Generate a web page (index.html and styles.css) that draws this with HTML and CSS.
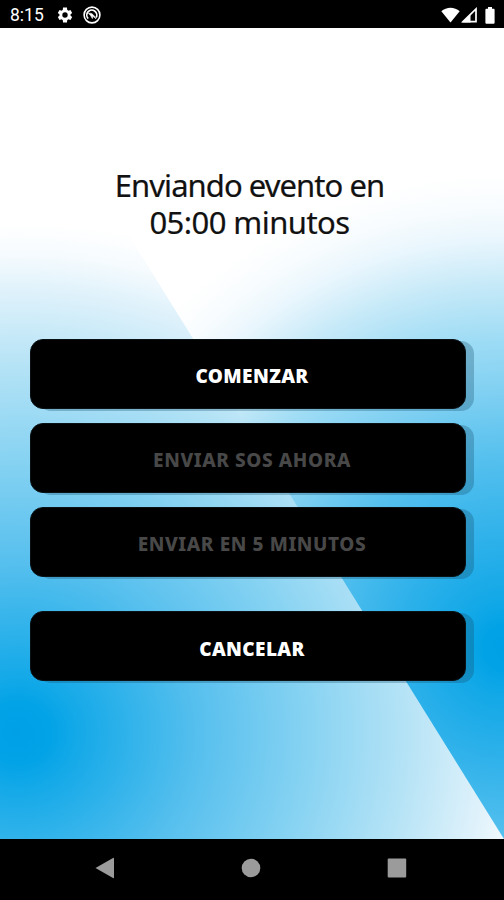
FILE: index.html
```html
<!DOCTYPE html>
<html lang="es">
<head>
    <meta charset="UTF-8">
    <meta name="viewport" content="width=device-width, initial-scale=1.0">
    <title>Enviando evento</title>
    <link rel="stylesheet" href="styles.css">
</head>
<body>

    <header class="status-bar">
        <div class="status-left">
            <span class="clock">8:15</span>
            <svg class="gear" width="18" height="18" viewBox="0 0 24 24">
                <path fill="#fff" fill-rule="evenodd" d="M19.4 13a7.500 7.500 0 0 0 0-2l2.200-1.700-2.300-4-2.700 1a7.500 7.500 0 0 0-1.600-1L14.600 2H9.400L9 5.300a7.500 7.500 0 0 0-1.600 1l-2.700-1-2.300 4L4.600 11a7.500 7.500 0 0 0 0 2l-2.200 1.700 2.300 4 2.700-1a7.500 7.500 0 0 0 1.600 1l.4 3.300h5.200l.4-3.300a7.500 7.500 0 0 0 1.600-1l2.700 1 2.300-4zM12 15.600a3.600 3.600 0 1 1 0-7.200 3.600 3.600 0 0 1 0 7.200z"/>
            </svg>
            <svg class="target" width="18" height="18" viewBox="0 0 18 18" fill="none" stroke="#fff">
                <circle cx="9" cy="9" r="7.900" stroke-width="1.600"/>
                <path d="M5.200 12.600A5 5 0 1 1 13.200 11.500" stroke-width="1.700"/>
                <path d="M5.500 7.500C8 6.600 10.500 8 13 12.800L9.800 10.200 9.400 12.600 7.600 9.600z" fill="#fff" stroke-width=".6"/>
            </svg>
        </div>
        <div class="status-right">
            <svg width="19" height="16" viewBox="0 0 19 16">
                <path fill="#fff" d="M.3 4.300C5.500-.5 13.500-.5 18.700 4.300L9.500 15.500z"/>
            </svg>
            <svg width="17" height="16" viewBox="0 0 17 16">
                <path fill="none" stroke="#fff" stroke-width="1.700" d="M2 14.700L15 2v12.700z"/>
                <path fill="#fff" d="M1 15.400l8.500-8.300v8.300z"/>
            </svg>
            <svg class="battery" width="10" height="17" viewBox="0 0 10 17">
                <path fill="#fff" d="M3 0h4v1.800h1.600q1 0 1 1v13q0 1-1 1H1.400q-1 0-1-1v-13q0-1 1-1H3z"/>
            </svg>
        </div>
    </header>

    <main class="screen">
        <h1 class="title">
            <span class="line-1">Enviando evento en</span>
            <span class="line-2">05:00 minutos</span>
        </h1>

        <div class="buttons">
            <button class="btn start">COMENZAR</button>
            <button class="btn sos" disabled>ENVIAR SOS AHORA</button>
            <button class="btn later" disabled>ENVIAR EN 5 MINUTOS</button>
            <button class="btn cancel">CANCELAR</button>
        </div>
    </main>

    <nav class="nav-bar">
        <svg width="20" height="22" viewBox="0 0 20 22"><path fill="#9b9b9b" d="M.5 11L18 1q1-.5 1 .5v19q0 1-1 .5z"/></svg>
        <svg width="20" height="20" viewBox="0 0 20 20"><circle cx="10" cy="10" r="9.300" fill="#9b9b9b"/></svg>
        <svg width="20" height="20" viewBox="0 0 20 20"><rect x=".7" y=".5" width="18.500" height="19" rx="1" fill="#9b9b9b"/></svg>
    </nav>

</body>
</html>
```
FILE: styles.css
```css
* {
    box-sizing: border-box;
}

body {
    margin: 0;
    height: 900px;
    display: flex;
    flex-direction: column;
    background-color: #000;
    font-family: "Noto Sans", "Open Sans", sans-serif;
    overflow: hidden;
}

.status-bar {
    height: 28px;
    display: flex;
    justify-content: space-between;
    align-items: center;
    padding: 2px 9px 0 10px;
    color: #fff;
}

.status-left,
.status-right {
    display: flex;
    align-items: center;
}

.clock {
    font-family: Roboto, sans-serif;
    font-size: 17.5px;
    line-height: 20px;
    width: 46px;
}

.target {
    margin-left: 9px;
}

.status-right svg:nth-child(2) {
    margin-left: 1px;
}

.battery {
    margin-left: 7px;
}

.screen {
    position: relative;
    height: 811px;
    padding: 139px 38px 0 30px;
    background: radial-gradient(ellipse 540px 510px at 18px 705px, #00a0e6 0, #02a3e7 6%, #14a9e8 11%, #58c0ee 34%, #85d2f2 53%, #b5e3f6 72%, #e0f2fb 87%, #f6fbfe 94%, #fff 100%);
}

/* upper right half, split along the diagonal */
.screen::before {
    content: "";
    position: absolute;
    inset: 0;
    clip-path: polygon(0 0, 100% 0, 100% 100%);
    background: radial-gradient(circle 475px at 506px 620px, #00a0e6 0, #02a3e6 5%, #12a8e7 10%, #2eb1ea 23%, #55c0ee 40%, #80d0f2 54%, #9edcf5 65%, #c8eaf8 77%, #e9f6fd 86%, #f8fcfe 93%, #fff 100%);
}

.title {
    position: relative;
    margin: 0 0 0 3px;
    text-align: center;
    font-size: 31px;
    font-weight: 400;
    line-height: 37px;
    color: #111;
    -webkit-text-stroke: 0.2px #111;
    white-space: nowrap;
}

.title span {
    display: block;
}

.line-1 {
    letter-spacing: -0.95px;
}

.line-2 {
    letter-spacing: -0.55px;
}

.buttons {
    position: relative;
    margin-top: 97.5px;
    display: flex;
    flex-direction: column;
    gap: 14px;
}

.btn {
    height: 70px;
    padding: 5px 0 0 8px;
    border: 1px solid #0a1216;
    border-radius: 13px;
    background-color: #000;
    box-shadow: 8px 2px 0 rgba(20, 75, 105, 0.3);
    color: #fff;
    font-family: "Noto Sans", "Open Sans", sans-serif;
    font-size: 19px;
    font-weight: 900;
    letter-spacing: 0.4px;
}

.btn:disabled {
    color: #484848;
    font-weight: 800;
    letter-spacing: 0.6px;
}

.cancel {
    margin-top: 20.5px;
}

.nav-bar {
    height: 61px;
    display: flex;
    justify-content: space-between;
    align-items: center;
    padding: 0 97px 3px 95px;
}
```
